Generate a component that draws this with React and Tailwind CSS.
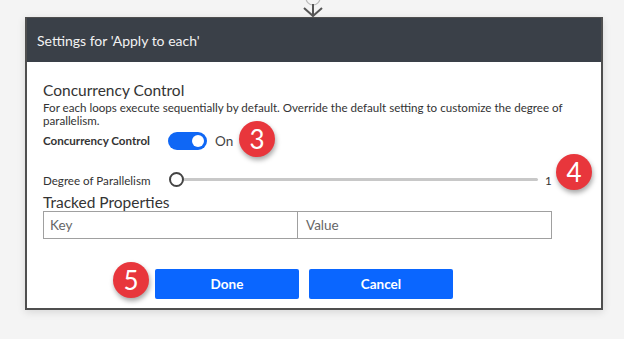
import { useState } from 'react'

function Badge({ n, className }) {
  return (
    <span
      className={`absolute w-[36px] h-[36px] rounded-full bg-[#e8363c] text-white text-[26px] leading-none flex items-center justify-center shadow-[1px_3px_5px_rgba(0,0,0,0.35)] ${className}`}
    >
      {n}
    </span>
  )
}

function Connector() {
  return (
    <div className="h-[17px] flex justify-center pl-[2px]">
      <svg width="22" height="17" viewBox="0 0 22 17" fill="none" stroke="#555" strokeWidth="2">
        <path d="M4 -2 A7 7 0 0 0 18 -2" stroke="#bbb" strokeWidth="1.2" />
        <path d="M11 4 V16" />
        <path d="M2 8 L11 16 L20 8" />
      </svg>
    </div>
  )
}

export default function App() {
  const [on, setOn] = useState(true)

  return (
    <div
      className="relative w-[624px] h-[339px] overflow-hidden bg-[#f4f4f4] text-[#333]"
      style={{ fontFamily: '"Segoe UI", Lato, "Liberation Sans", sans-serif' }}
    >
      <Connector />
      <div className="ml-[25px] w-[578px] border-2 border-t border-[#4f4f4f] bg-white shadow-[0_2px_8px_rgba(0,0,0,0.12)]">
        <div className="h-[44px] bg-[#3a4048] px-[10px] flex items-center text-[14px] text-[#f2f2f2]">
          Settings for 'Apply to each'
        </div>

        <div className="pl-[16px] pr-[20px] pt-[19px] pb-[9px]">
          <h2 className="text-[15.5px] leading-[18px] text-[#333]">Concurrency Control</h2>
          <p className="mt-[2px] text-[11.6px] leading-[13px] text-[#333]">
            For each loops execute sequentially by default. Override the default setting to customize the degree of parallelism.
          </p>

          <div className="mt-[5px] flex items-center h-[18px]">
            <span className="w-[125px] text-[11.6px] font-bold text-[#333]">Concurrency Control</span>
            <button
              onClick={() => setOn(!on)}
              className={`w-[39px] h-[18px] rounded-full flex items-center px-[3px] ${on ? 'bg-[#0f67f5] justify-end' : 'bg-[#ccc] justify-start'}`}
            >
              <span className="w-[12px] h-[12px] rounded-full bg-white" />
            </button>
            <span className="ml-[8px] text-[13.5px] text-[#444]">{on ? 'On' : 'Off'}</span>
          </div>

          <div className="mt-[21px] w-[509px] flex items-center h-[16px]">
            <span className="w-[126px] text-[11.6px] text-[#333] pt-[3px]">Degree of Parallelism</span>
            <div className="relative flex-1 flex items-center h-[16px]">
              <span className="absolute left-0 w-[15px] h-[15px] rounded-full border-2 border-[#444] bg-white" />
              <div className="ml-[14px] flex-1 h-[3px] rounded-full bg-[#c8c8c8]" />
            </div>
            <span className="ml-[7px] w-[7px] text-[11.6px] text-[#333] pt-[3px]">1</span>
          </div>

          <h2 className="mt-[6px] text-[15.5px] leading-[18px] text-[#333]">Tracked Properties</h2>
          <div className="w-[509px] h-[28px] flex border border-[#a0a0a0] text-[13.5px] text-[#666]">
            <div className="w-[254px] border-r border-[#a0a0a0] px-[6px] flex items-center">Key</div>
            <div className="flex-1 px-[8px] flex items-center">Value</div>
          </div>

          <div className="mt-[30px] pl-[112px] flex gap-[10px]">
            <button className="w-[144px] h-[30px] bg-[#0a66ff] rounded-[2px] text-white text-[13.5px] font-bold">Done</button>
            <button className="w-[144px] h-[30px] bg-[#0a66ff] rounded-[2px] text-white text-[13.5px] font-bold">Cancel</button>
          </div>
        </div>
      </div>

      <Badge n="3" className="left-[239px] top-[121px]" />
      <Badge n="4" className="left-[556px] top-[154px]" />
      <Badge n="5" className="left-[113px] top-[262px]" />
    </div>
  )
}
